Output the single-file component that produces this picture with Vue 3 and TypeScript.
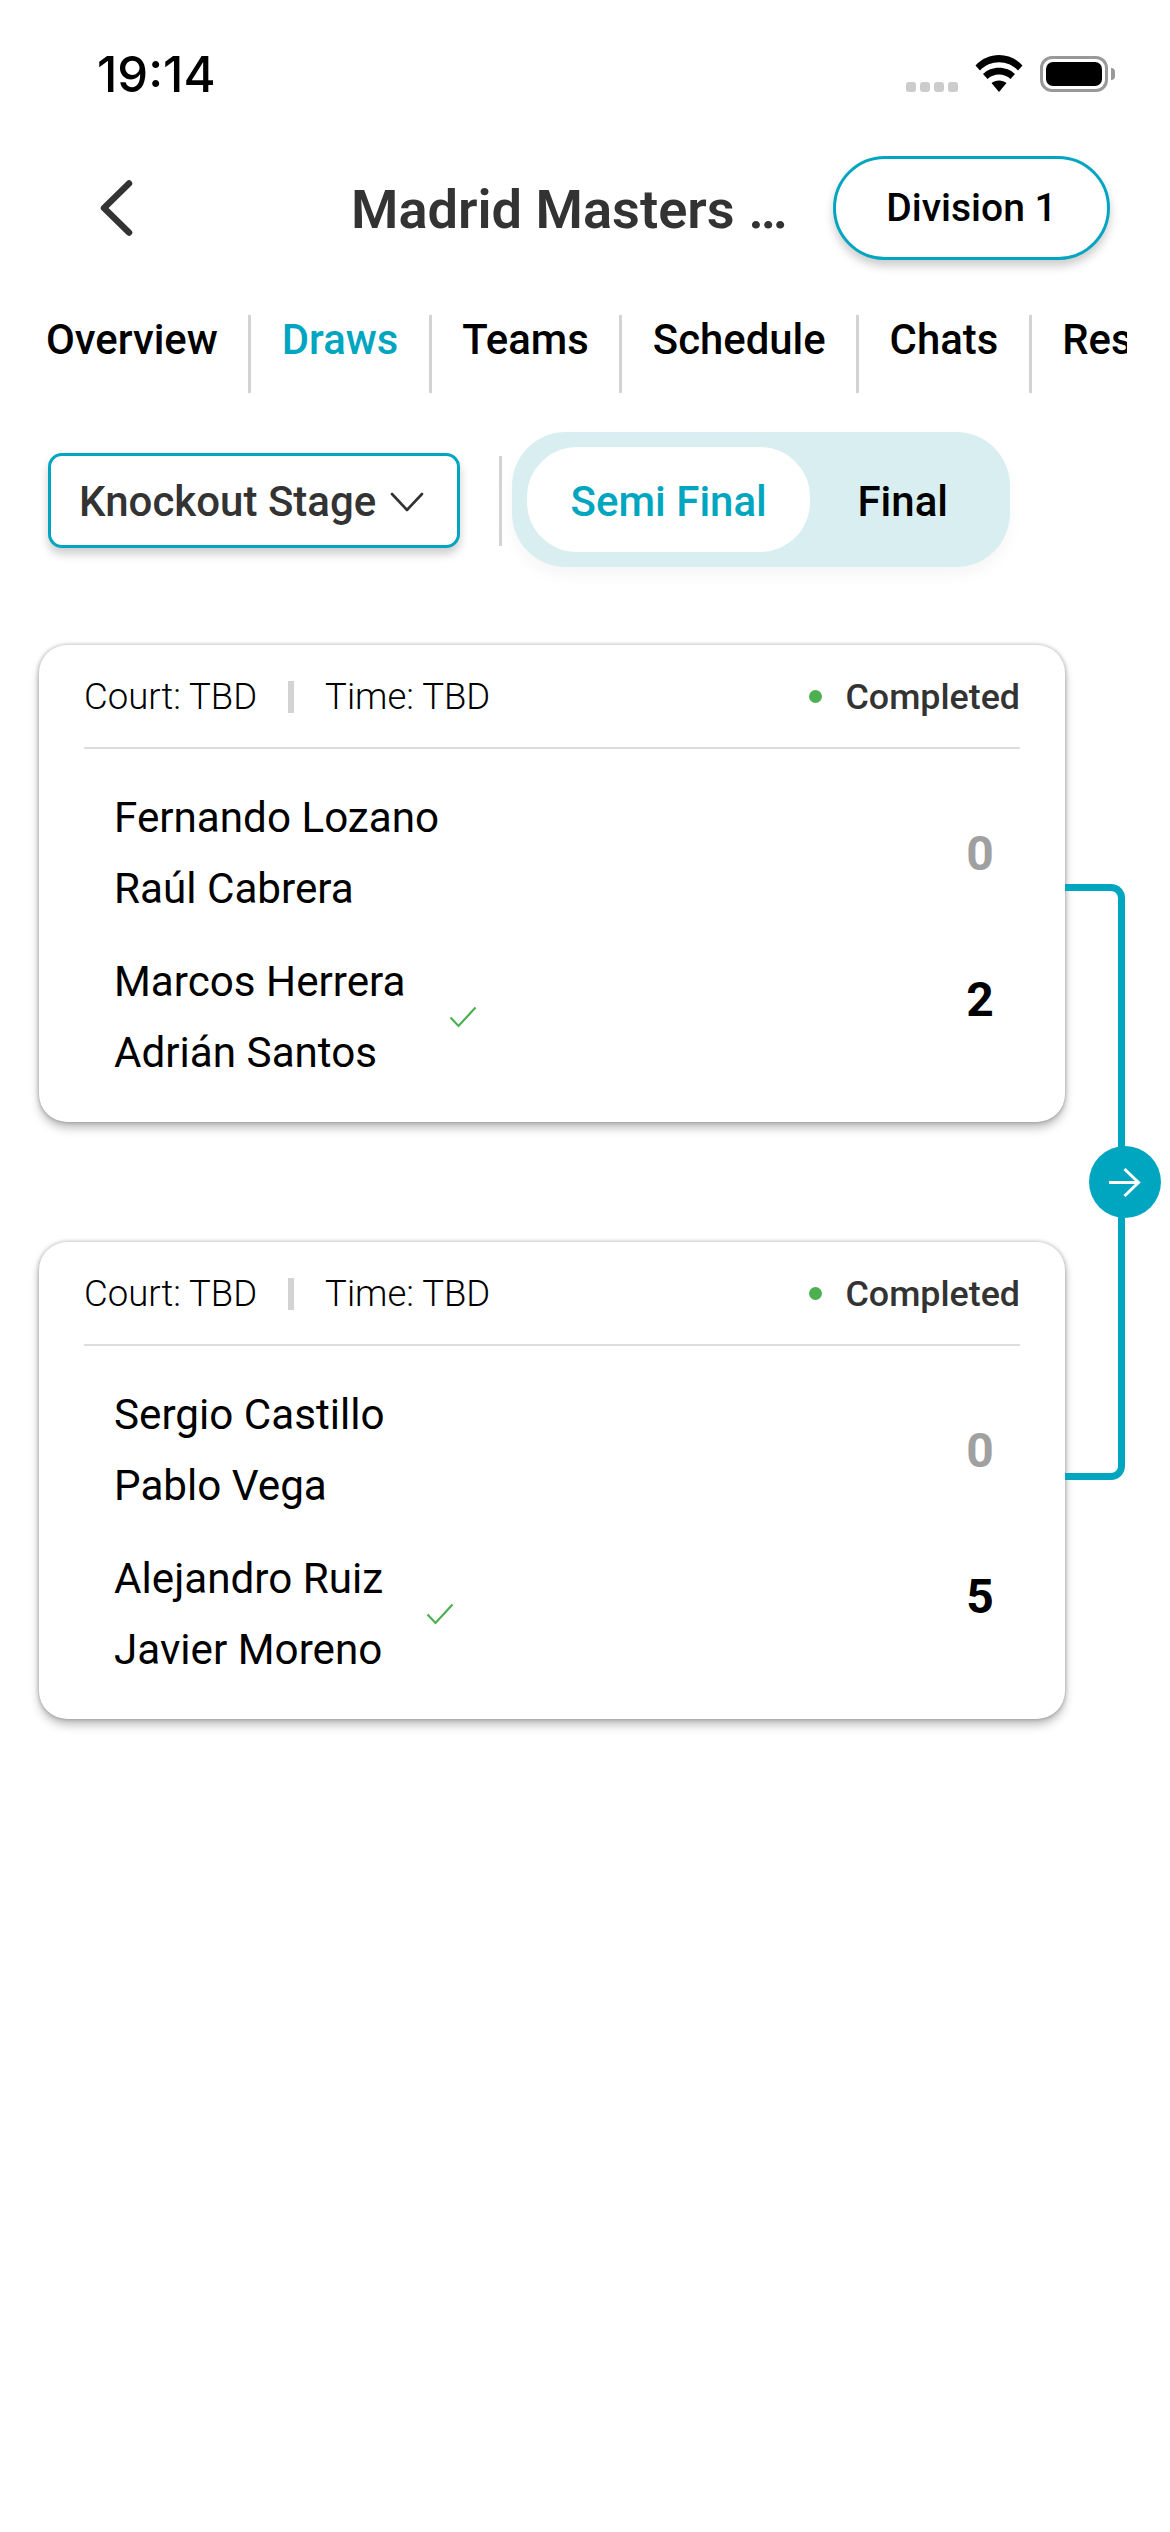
<script setup lang="ts">
interface Match {
  top: string[]
  bottom: string[]
  topScore: number
  bottomScore: number
}

const tabs = ['Overview', 'Draws', 'Teams', 'Schedule', 'Chats', 'Results']

const matches: Match[] = [
  { top: ['Fernando Lozano', 'Raúl Cabrera'], bottom: ['Marcos Herrera', 'Adrián Santos'], topScore: 0, bottomScore: 2 },
  { top: ['Sergio Castillo', 'Pablo Vega'], bottom: ['Alejandro Ruiz', 'Javier Moreno'], topScore: 0, bottomScore: 5 },
]
</script>

<template>
  <div class="screen">
    <!-- Status bar -->
    <div class="status-bar">
      <span class="clock">19:14</span>
      <div class="status-icons">
        <div class="signal"><i></i><i></i><i></i><i></i></div>
        <svg class="wifi" width="48" height="37" viewBox="0 0 48 37">
          <path d="M0.5 10.5C13-3.5 35-3.5 47.5 10.5L43 15.5C33 4.5 15 4.5 5 15.5Z" fill="#000" />
          <path d="M8 19C16 10.5 32 10.5 40 19L35.5 24C29.5 18 18.5 18 12.5 24Z" fill="#000" />
          <path d="M16.5 28C20.5 24.5 27.5 24.5 31.5 28L24 37Z" fill="#000" />
        </svg>
        <div class="battery"><div class="battery-fill"></div></div>
      </div>
    </div>

    <!-- Title row -->
    <header class="title-row">
      <svg class="back" width="36" height="60" viewBox="0 0 36 60">
        <path d="M31 5.5 6 30l25 24.5" fill="none" stroke="#333" stroke-width="6.5" stroke-linecap="round" stroke-linejoin="round" />
      </svg>
      <h1 class="title">Madrid Masters …</h1>
      <button class="division">Division 1</button>
    </header>

    <!-- Tabs -->
    <nav class="tabs">
      <span v-for="(tab, index) in tabs" :key="tab" class="tab" :class="{ active: index === 1 }">{{ tab }}</span>
    </nav>

    <!-- Stage filter -->
    <div class="filters">
      <button class="stage">
        Knockout Stage
        <svg width="34" height="20" viewBox="0 0 34 20">
          <path d="M2 2 17 18 32 2" fill="none" stroke="#333" stroke-width="2.6" stroke-linecap="round" stroke-linejoin="round" />
        </svg>
      </button>
      <span class="filter-sep"></span>
      <div class="rounds">
        <span class="round on">Semi Final</span>
        <span class="round">Final</span>
      </div>
    </div>

    <!-- Bracket -->
    <section class="bracket">
      <article v-for="(match, index) in matches" :key="index" class="card">
        <div class="card-head">
          <span>Court: TBD</span>
          <span class="head-sep"></span>
          <span>Time: TBD</span>
          <span class="state"><i class="dot"></i>Completed</span>
        </div>
        <div class="team-row">
          <div class="names">
            <p v-for="name in match.top" :key="name">{{ name }}</p>
          </div>
          <span class="score lost">{{ match.topScore }}</span>
        </div>
        <div class="team-row second">
          <div class="names">
            <p v-for="name in match.bottom" :key="name">{{ name }}</p>
          </div>
          <svg class="tick" width="28" height="22" viewBox="0 0 28 22">
            <path d="M1.5 11.5 9.5 20 26.5 1.5" fill="none" stroke="#4caf50" stroke-width="2.2" />
          </svg>
          <span class="score">{{ match.bottomScore }}</span>
        </div>
      </article>

      <div class="connector"></div>
      <div class="next">
        <svg width="32" height="31" viewBox="0 0 32 31">
          <path d="M0 15.5h29.5M15.5 2l14 13.5-14 13.5" fill="none" stroke="#fff" stroke-width="3" />
        </svg>
      </div>
    </section>
  </div>
</template>

<style scoped>
.screen {
  width: 1170px;
  height: 2532px;
  background: #fff;
  font-family: Roboto, sans-serif;
  color: #000;
  overflow: hidden;
}

.status-bar {
  height: 156px;
  box-sizing: border-box;
  padding: 50px 62px 0 97px;
  display: flex;
  justify-content: space-between;
  align-items: flex-start;
}

.clock {
  margin-top: 1px;
  font-family: Inter, sans-serif;
  font-size: 49px;
  font-weight: 500;
  line-height: 48px;
}

.status-icons {
  display: flex;
  align-items: flex-end;
  height: 37px;
  margin-top: 5px;
}

.signal {
  display: flex;
  gap: 4px;
  margin-right: 17px;
}

.signal i {
  width: 10px;
  height: 10px;
  border-radius: 3px;
  background: #ccc;
}

.wifi {
  margin-right: 17px;
}

.battery {
  position: relative;
  width: 68px;
  height: 36px;
  box-sizing: border-box;
  border: 3px solid #999;
  border-radius: 12px;
  padding: 3px;
}

.battery::after {
  content: '';
  position: absolute;
  right: -10px;
  top: 9px;
  width: 4px;
  height: 12px;
  background: #999;
  border-radius: 0 6px 6px 0;
}

.battery-fill {
  height: 100%;
  background: #000;
  border-radius: 7px;
}

.title-row {
  height: 104px;
  display: flex;
  align-items: center;
  padding-left: 98px;
}

.title {
  width: 433px;
  margin: 2px 49px 0 217px;
  flex: none;
  font-size: 54.2px;
  font-weight: 600;
  color: #333;
  white-space: nowrap;
}

.division {
  width: 277px;
  height: 104px;
  box-sizing: border-box;
  flex: none;
  background: #fff;
  border: 3px solid #00a6c0;
  border-radius: 52px;
  box-shadow: 0 6px 10px rgba(0, 0, 0, 0.2);
  font-family: inherit;
  font-size: 39px;
  font-weight: 500;
  color: #000;
}

.tabs {
  margin-top: 55px;
  width: 1127px;
  height: 78px;
  display: flex;
  overflow: hidden;
}

.tab {
  flex: none;
  padding: 1px 30.5px 0;
  border-right: 3px solid #d3d3d3;
  font-size: 41.85px;
  font-weight: 500;
  line-height: 48px;
}

.tab:first-child {
  padding-left: 46px;
}

.tab.active {
  color: #00a6c0;
}

.filters {
  margin-top: 39px;
  display: flex;
  align-items: center;
  padding-left: 48px;
  height: 135px;
}

.stage {
  width: 412px;
  height: 95px;
  margin-top: 2px;
  box-sizing: border-box;
  display: flex;
  align-items: center;
  justify-content: space-between;
  padding: 2px 33px 0 28px;
  background: #fff;
  border: 3px solid #00a6c0;
  border-radius: 14px;
  box-shadow: 0 6px 10px rgba(0, 0, 0, 0.2);
  font-family: inherit;
  font-size: 42px;
  font-weight: 500;
  color: #333;
}

.filter-sep {
  width: 3px;
  height: 90px;
  margin: 2px 10px 0 39px;
  background: #d3d3d3;
}

.rounds {
  width: 498px;
  height: 135px;
  box-sizing: border-box;
  display: flex;
  align-items: center;
  padding: 0 15px;
  border-radius: 54px;
  background: #d9eef1;
  box-shadow: 0 8px 16px rgba(0, 0, 0, 0.04);
}

.round {
  height: 105px;
  box-sizing: border-box;
  display: flex;
  align-items: center;
  padding: 4px 47px 0;
  font-size: 42px;
  font-weight: 500;
}

.round.on {
  width: 287px;
  justify-content: center;
  padding: 4px 0 0;
  background: #fff;
  border-radius: 50px;
  color: #00a6c0;
}

.bracket {
  position: relative;
  margin-top: 78px;
  padding-left: 39px;
}

.card {
  width: 1026px;
  height: 477px;
  box-sizing: border-box;
  padding: 0 45px;
  margin-bottom: 120px;
  background: #fff;
  border-radius: 28px;
  box-shadow: 0 0 4px rgba(0, 0, 0, 0.3), 0 6px 10px rgba(0, 0, 0, 0.25);
}

.card-head {
  height: 104px;
  box-sizing: border-box;
  padding-top: 1px;
  display: flex;
  align-items: center;
  border-bottom: 2px solid #ddd;
  font-size: 36.5px;
  font-weight: 300;
}

.head-sep {
  width: 6px;
  height: 32px;
  margin: 0 31px;
  background: #d3d3d3;
}

.state {
  margin-left: auto;
  display: flex;
  align-items: center;
  font-size: 35.8px;
  color: #333;
  font-weight: 500;
}

.dot {
  width: 13px;
  height: 13px;
  margin-right: 23px;
  border-radius: 50%;
  background: #4caf50;
}

.team-row {
  display: flex;
  align-items: center;
  padding: 33px 0 0 30px;
}

.team-row.second {
  padding-top: 22px;
}

.names p {
  margin: 0;
  font-size: 42.2px;
  font-weight: 450;
  line-height: 71px;
}

.tick {
  margin-left: 43px;
}

.score {
  margin-left: auto;
  margin-right: 12px;
  width: 56px;
  text-align: center;
  font-size: 48px;
  font-weight: 700;
}

.second .score {
  margin-bottom: 36px;
}

.score.lost {
  color: #a0a0a0;
}

.connector {
  position: absolute;
  left: 1065px;
  top: 239px;
  width: 60px;
  height: 596px;
  box-sizing: border-box;
  border: 7px solid #00a6c0;
  border-left: none;
  border-radius: 0 14px 14px 0;
}

.next {
  position: absolute;
  left: 1089px;
  top: 501px;
  width: 72px;
  height: 72px;
  display: flex;
  align-items: center;
  justify-content: center;
  border-radius: 50%;
  background: #00a6c0;
}
</style>
